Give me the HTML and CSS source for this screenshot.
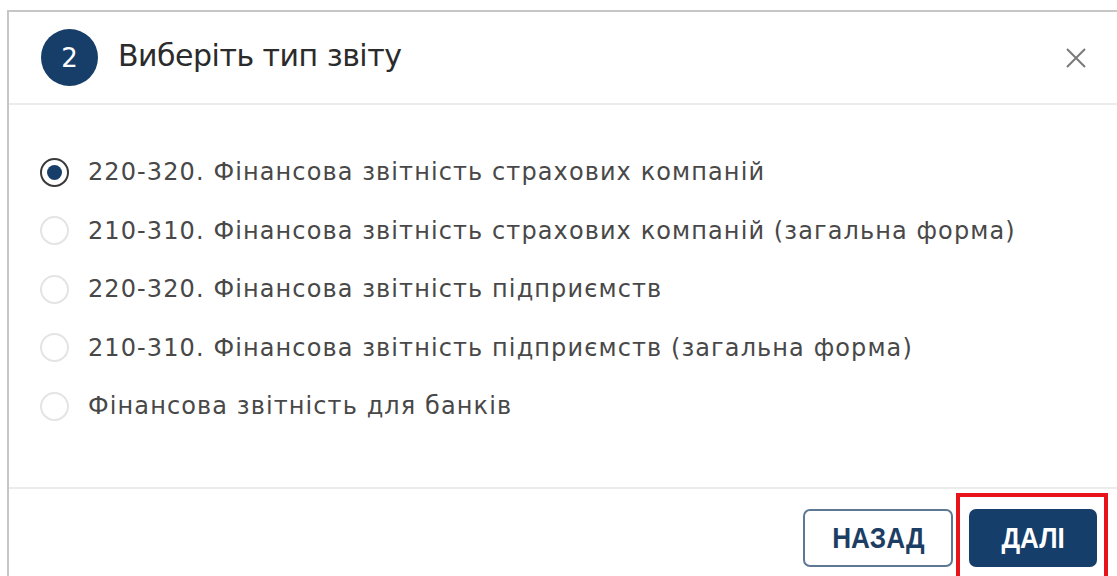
FILE: index.html
```html
<!DOCTYPE html>
<html lang="uk">
<head>
<meta charset="utf-8">
<title>Виберіть тип звіту</title>
<link rel="stylesheet" href="styles.css">
</head>
<body>
<div class="modal">
  <header class="modal-header">
    <span class="step-badge">2</span>
    <h2 class="modal-title">Виберіть тип звіту</h2>
    <button class="close-btn" type="button" aria-label="Закрити">
      <svg width="22" height="22" viewBox="0 0 22 22"><path d="M2 2 L20 20 M20 2 L2 20" stroke="#7a7a7a" stroke-width="2" fill="none"/></svg>
    </button>
  </header>
  <div class="modal-body">
    <label class="option"><input type="radio" name="report" checked><span class="radio"></span><span class="option-text">220-320. Фінансова звітність страхових компаній</span></label>
    <label class="option"><input type="radio" name="report"><span class="radio"></span><span class="option-text">210-310. Фінансова звітність страхових компаній (загальна форма)</span></label>
    <label class="option"><input type="radio" name="report"><span class="radio"></span><span class="option-text">220-320. Фінансова звітність підприємств</span></label>
    <label class="option"><input type="radio" name="report"><span class="radio"></span><span class="option-text">210-310. Фінансова звітність підприємств (загальна форма)</span></label>
    <label class="option"><input type="radio" name="report"><span class="radio"></span><span class="option-text">Фінансова звітність для банків</span></label>
  </div>
  <footer class="modal-footer">
    <button class="btn btn-outline" type="button"><span class="btn-label">НАЗАД</span></button>
    <span class="highlight-wrap">
      <button class="btn btn-primary" type="button"><span class="btn-label">ДАЛІ</span></button>
      <span class="highlight"></span>
    </span>
  </footer>
</div>
</body>
</html>
```
FILE: styles.css
```css
html, body {
  margin: 0;
  padding: 0;
  background: #fff;
  overflow: hidden;
}

body {
  font-family: "DejaVu Sans", Verdana, sans-serif;
}

.modal {
  box-sizing: border-box;
  width: 1112px;
  height: 580px;
  margin: 10px 0 0 7px;
  border: 2px solid #c6c6c6;
  background: #fff;
  display: flex;
  flex-direction: column;
}

.modal-header {
  display: flex;
  align-items: center;
  height: 91px;
  padding: 0 30px 0 32px;
  border-bottom: 2px solid #ececec;
}

.step-badge {
  flex: none;
  width: 57px;
  height: 57px;
  border-radius: 50%;
  background: #173e69;
  color: #fff;
  font-size: 26px;
  display: flex;
  align-items: center;
  justify-content: center;
}

.modal-title {
  margin: 0 0 0 20px;
  font-size: 30px;
  letter-spacing: -0.5px;
  font-weight: normal;
  color: #2b2b2b;
  flex: 1;
  position: relative;
  top: -2px;
}

.close-btn {
  border: 0;
  background: none;
  padding: 0;
  width: 22px;
  height: 22px;
  display: flex;
}

.modal-body {
  padding: 38px 0 0 31px;
  height: 344px;
  border-bottom: 2px solid #ececec;
}

.option {
  display: flex;
  align-items: center;
  height: 58.5px;
}

.option input {
  display: none;
}

.radio {
  box-sizing: border-box;
  width: 29px;
  height: 29px;
  border-radius: 50%;
  border: 2px solid #e4e4e4;
  margin-right: 19px;
  flex: none;
  display: flex;
  align-items: center;
  justify-content: center;
}

.option input:checked + .radio {
  border-color: #3a3a3a;
}

.option input:checked + .radio::after {
  content: "";
  width: 15px;
  height: 15px;
  border-radius: 50%;
  background: #173e69;
}

.option-text {
  font-size: 24px;
  letter-spacing: 1.1px;
  color: #484848;
}

.modal-footer {
  display: flex;
  justify-content: flex-end;
  align-items: flex-start;
  gap: 16px;
  padding: 20px 20px 0 0;
}

.btn {
  box-sizing: border-box;
  height: 58px;
  border-radius: 7px;
  font-family: "Liberation Sans", Arial, sans-serif;
  font-weight: bold;
  font-size: 29px;
  cursor: pointer;
  display: flex;
  align-items: center;
  justify-content: center;
  padding: 0;
}

.btn-label {
  display: inline-block;
  transform: scaleX(0.9);
}

.btn-outline {
  width: 150px;
  border: 2px solid #5d7893;
  background: #fff;
  color: #1d3e64;
}

.btn-primary {
  width: 128px;
  border: 0;
  background: #163e6a;
  color: #fff;
}

.highlight-wrap {
  position: relative;
  display: flex;
}

.highlight {
  position: absolute;
  left: -13px;
  right: -11px;
  top: -16px;
  bottom: -30px;
  border: 4px solid #e8141b;
  pointer-events: none;
}
```
